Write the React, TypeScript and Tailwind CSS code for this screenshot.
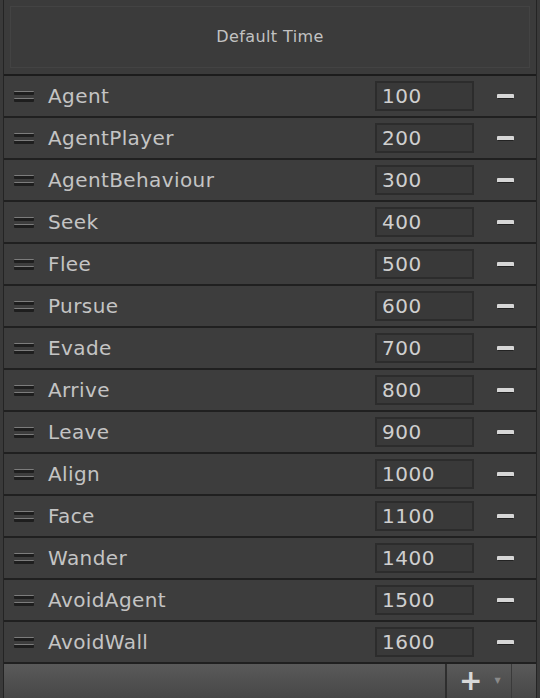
import React from 'react';

const rows: [string, number][] = [
  ['Agent', 100],
  ['AgentPlayer', 200],
  ['AgentBehaviour', 300],
  ['Seek', 400],
  ['Flee', 500],
  ['Pursue', 600],
  ['Evade', 700],
  ['Arrive', 800],
  ['Leave', 900],
  ['Align', 1000],
  ['Face', 1100],
  ['Wander', 1400],
  ['AvoidAgent', 1500],
  ['AvoidWall', 1600],
];

function Handle() {
  return (
    <div className="flex flex-col gap-[3px] w-[20px]">
      <div className="h-[4px] bg-[#1e1e1e] border-t border-[#7c7c7c] rounded-[1px]" />
      <div className="h-[4px] bg-[#1e1e1e] border-t border-[#7c7c7c] rounded-[1px]" />
    </div>
  );
}

function Row({ name, value }: { name: string; value: number }) {
  return (
    <div className="h-[42px] flex items-center border-b-2 border-[#202020] bg-[#3d3d3d]">
      <div className="pl-[10px] pr-[14px]">
        <Handle />
      </div>
      <div className="flex-1 text-[20px] text-[#c4c4c4] tracking-[0.4px]">{name}</div>
      <div className="w-[99px] h-[30px] mr-[22px] bg-[#393939] border-2 border-[#2c2c2c] flex items-center pl-[5px] text-[20px] text-[#cfcfcf] tracking-[0.5px]">
        {value}
      </div>
      <div className="w-[40px] flex justify-start pl-[1px]">
        <div className="w-[17px] h-[5px] bg-[#d6d6d6] rounded-[1px] border-b border-[#222]" />
      </div>
    </div>
  );
}

export default function App() {
  return (
    <div
      className="w-[540px] h-[698px] bg-[#393939] overflow-hidden flex"
      style={{ fontFamily: '"DejaVu Sans", "Noto Sans", sans-serif' }}
    >
      <div className="w-[3px] bg-[#3a3a3a]" />
      <div className="flex-1 flex flex-col border-l border-r border-[#242424]">
        <div className="h-[76px] bg-[#3b3b3b] border-b-2 border-[#1c1c1c] p-[6px]">
          <div className="h-full border border-[#434343] flex items-center justify-center text-[16px] text-[#c2c2c2] tracking-[0.4px]">
            Default Time
          </div>
        </div>
        {rows.map(([n, v]) => (
          <Row key={n} name={n} value={v} />
        ))}
        <div className="flex-1 flex bg-gradient-to-b from-[#5a5a5a] to-[#474747]">
          <div className="flex-1" />
          <div className="w-[66px] border-l-2 border-[#2e2e2e] flex items-center pl-[12px] gap-[12px]">
            <span className="text-[28px] font-bold text-[#d8d8d8] leading-none">+</span>
            <span className="text-[8px] text-[#8a8a8a] leading-none">▼</span>
          </div>
          <div className="w-[25px] border-l border-[#3a3a3a]" />
        </div>
      </div>
      <div className="w-[3px] bg-[#3a3a3a]" />
    </div>
  );
}
